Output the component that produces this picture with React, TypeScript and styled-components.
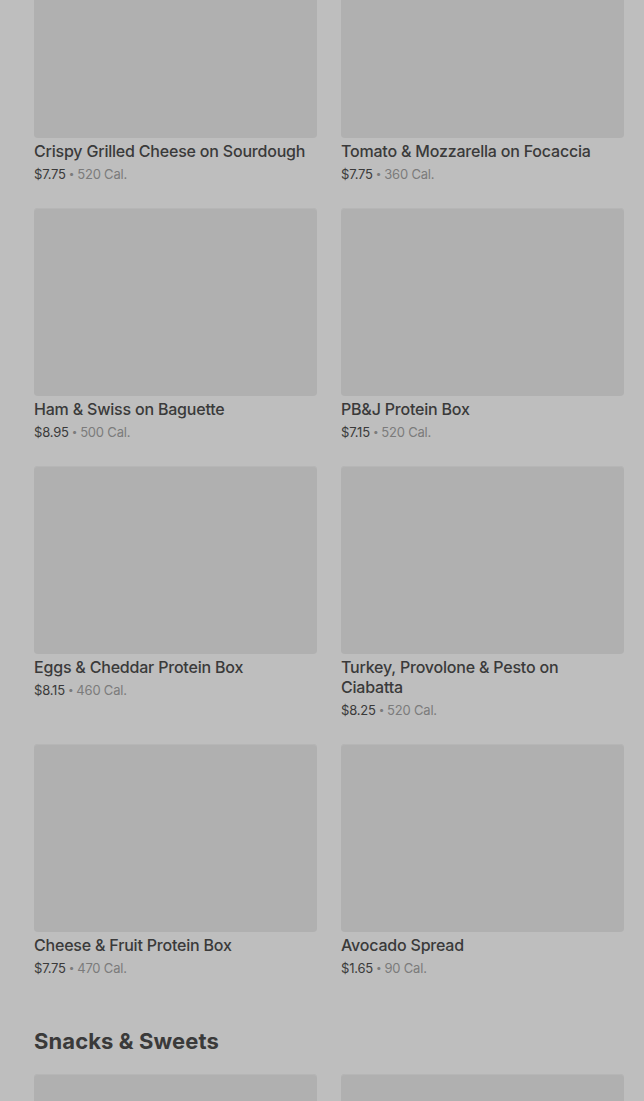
import React from 'react'
import styled, { createGlobalStyle } from 'styled-components'

const GlobalStyle = createGlobalStyle`
  html, body {
    margin: 0;
    padding: 0;
    background: #bebebe;
    overflow: hidden;
  }
  body {
    font-family: Inter, "Noto Sans", "Liberation Sans", sans-serif;
    -webkit-font-smoothing: antialiased;
  }
`

const Page = styled.div`
  width: 644px;
  height: 1101px;
  overflow: hidden;
  background: #bebebe;
`

const Content = styled.div`
  margin-top: -50px;
  padding: 0 20px 0 34px;
`

const Section = styled.section`
  & + & {
    margin-top: 49px;
  }
`

const SectionTitle = styled.h2`
  margin: 0 0 19px;
  font-size: 22px;
  line-height: 28px;
  font-weight: 700;
  letter-spacing: 0.1px;
  color: #3a3a3a;
`

const Grid = styled.div`
  display: grid;
  grid-template-columns: repeat(2, 283px);
  column-gap: 24px;
  row-gap: 24px;
`

const Card = styled.div`
  display: flex;
  flex-direction: column;
`

const Thumb = styled.div`
  height: 188px;
  border-radius: 4px;
  background: #b0b0b0;
  box-shadow: inset 0 1px 0 #b6b6b6;
`

const ItemName = styled.div`
  margin-top: 3px;
  font-size: 16px;
  line-height: 20px;
  font-weight: 500;
  letter-spacing: -0.2px;
  color: #3a3a3a;
`

const Meta = styled.div`
  margin-top: 3px;
  height: 20px;
  font-size: 13px;
  line-height: 20px;
  letter-spacing: -0.2px;
  color: #7b7b7b;
`

const Price = styled.span`
  color: #3a3a3a;
`

const Dot = styled.span`
  display: inline-block;
  margin: 0 3px;
  font-size: 10px;
  line-height: 0;
  vertical-align: 2px;
`

type Item = { name: string; price: string; cal: number }

const mainItems: Item[] = [
  { name: 'Crispy Grilled Cheese on Sourdough', price: '$7.75', cal: 520 },
  { name: 'Tomato & Mozzarella on Focaccia', price: '$7.75', cal: 360 },
  { name: 'Ham & Swiss on Baguette', price: '$8.95', cal: 500 },
  { name: 'PB&J Protein Box', price: '$7.15', cal: 520 },
  { name: 'Eggs & Cheddar Protein Box', price: '$8.15', cal: 460 },
  { name: 'Turkey, Provolone & Pesto on Ciabatta', price: '$8.25', cal: 520 },
  { name: 'Cheese & Fruit Protein Box', price: '$7.75', cal: 470 },
  { name: 'Avocado Spread', price: '$1.65', cal: 90 }
]

const MenuCard: React.FC<{ item?: Item }> = ({ item }) => (
  <Card>
    <Thumb />
    {item && (
      <>
        <ItemName>{item.name}</ItemName>
        <Meta>
          <Price>{item.price}</Price>
          <Dot>•</Dot>
          {item.cal} Cal.
        </Meta>
      </>
    )}
  </Card>
)

const App: React.FC = () => {
  return (
    <Page>
      <GlobalStyle />
      <Content>
        <Section>
          <Grid>
            {mainItems.map((item, index) => (
              <MenuCard key={index} item={item} />
            ))}
          </Grid>
        </Section>
        <Section>
          <SectionTitle>Snacks &amp; Sweets</SectionTitle>
          <Grid>
            <MenuCard />
            <MenuCard />
          </Grid>
        </Section>
      </Content>
    </Page>
  )
}

export default App
